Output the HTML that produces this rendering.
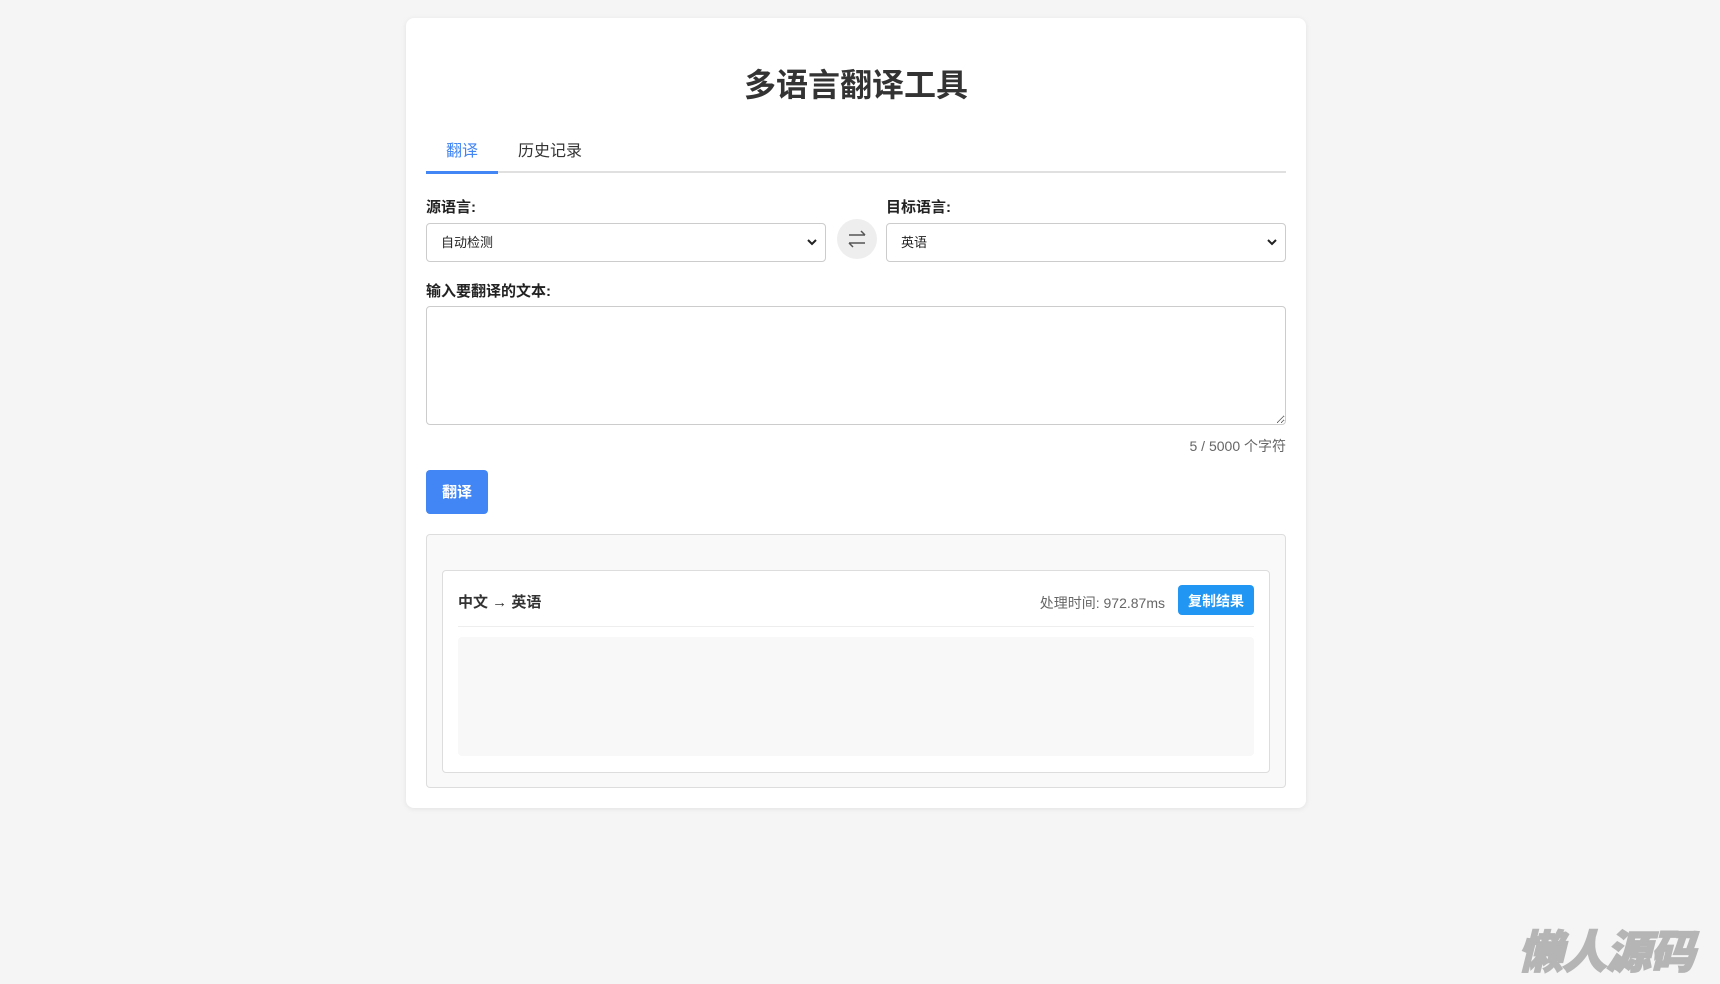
<!DOCTYPE html>
<html><head><meta charset="utf-8"><style>
*{box-sizing:border-box;margin:0;padding:0}
body{width:1720px;height:984px;background:#f5f5f5;font-family:"Liberation Sans","Noto Sans CJK SC",sans-serif;position:relative;overflow:hidden;color:#333}
.card{position:absolute;left:406px;top:18px;width:900px;height:790px;background:#fff;border-radius:8px;box-shadow:0 1px 6px rgba(0,0,0,.08)}
h1{position:absolute;top:45px;left:0;width:100%;text-align:center;font-size:32px;font-weight:bold;color:#333;line-height:44px}
.tabs{position:absolute;left:20px;top:116px;width:860px;height:39px;border-bottom:2px solid #e0e0e0}
.tab{position:absolute;top:0;height:38px;line-height:36px;font-size:16px}
.t1{left:0;width:72px;text-align:center;color:#4285f4;border-bottom:3px solid #4285f4;height:40px}
.t2{left:92px;color:#333}
.lab{position:absolute;font-size:15px;font-weight:bold;color:#222}
.sel{position:absolute;top:205px;height:39px;border:1px solid #ccc;border-radius:4px;font-size:13px;line-height:37px;padding-left:14px;color:#222}
.sel svg{position:absolute;right:8px;top:14px}
.swap{position:absolute;left:431px;top:201px;width:40px;height:40px;border-radius:50%;background:#eee}
textarea{position:absolute;left:20px;top:288px;width:860px;height:119px;border:1px solid #ccc;border-radius:4px;resize:vertical}
.cnt{position:absolute;right:20px;top:418px;font-size:14px;color:#666}
.btn{position:absolute;left:20px;top:452px;width:62px;height:44px;background:#4285f4;color:#fff;border-radius:4px;font-size:15px;font-weight:bold;text-align:center;line-height:46px}
.res{position:absolute;left:20px;top:516px;width:860px;height:254px;background:#f9f9f9;border:1px solid #ddd;border-radius:4px}
.inner{position:absolute;left:15px;top:35px;width:828px;height:203px;background:#fff;border:1px solid #ddd;border-radius:4px}
.hd{position:absolute;left:15px;top:20px;font-size:15px;font-weight:bold;color:#333}
.tm{position:absolute;right:104px;top:22px;font-size:14px;color:#666}
.cp{position:absolute;right:15px;top:14px;width:76px;height:30px;background:#2196f3;color:#fff;border-radius:4px;font-size:14px;font-weight:bold;text-align:center;line-height:32px}
.ln{position:absolute;left:15px;right:15px;top:55px;border-top:1px solid #eee}
.box{position:absolute;left:15px;right:15px;top:66px;height:119px;background:#f8f8f8;border-radius:4px}
.wm{position:absolute;left:1518px;top:916px;font-size:45px;font-weight:900;font-style:italic;color:#b5b5b5;letter-spacing:-1px;-webkit-text-stroke:1.5px #b5b5b5}
</style></head><body>
<div class="card">
<h1>多语言翻译工具</h1>
<div class="tabs"><div class="tab t1">翻译</div><div class="tab t2">历史记录</div></div>
<div class="lab" style="left:20px;top:178px">源语言:</div>
<div class="lab" style="left:480px;top:178px">目标语言:</div>
<div class="sel" style="left:20px;width:400px">自动检测<svg width="10" height="8" viewBox="0 0 10 8"><path d="M1 2l4 4 4-4" stroke="#222" stroke-width="2" fill="none"/></svg></div>
<div class="swap"><svg width="40" height="40" viewBox="0 0 40 40"><path d="M12 16h16M24 12l4 4M28 24H12M16 28l-4-4" stroke="#555" stroke-width="1.5" fill="none"/></svg></div>
<div class="sel" style="left:480px;width:400px">英语<svg width="10" height="8" viewBox="0 0 10 8"><path d="M1 2l4 4 4-4" stroke="#222" stroke-width="2" fill="none"/></svg></div>
<div class="lab" style="left:20px;top:262px">输入要翻译的文本:</div>
<textarea></textarea>
<div class="cnt">5 / 5000 个字符</div>
<div class="btn">翻译</div>
<div class="res"><div class="inner">
<div class="hd">中文 → 英语</div>
<div class="tm">处理时间: 972.87ms</div>
<div class="cp">复制结果</div>
<div class="ln"></div>
<div class="box"></div>
</div></div>
</div>
<div class="wm">懒人源码</div>
</body></html>
